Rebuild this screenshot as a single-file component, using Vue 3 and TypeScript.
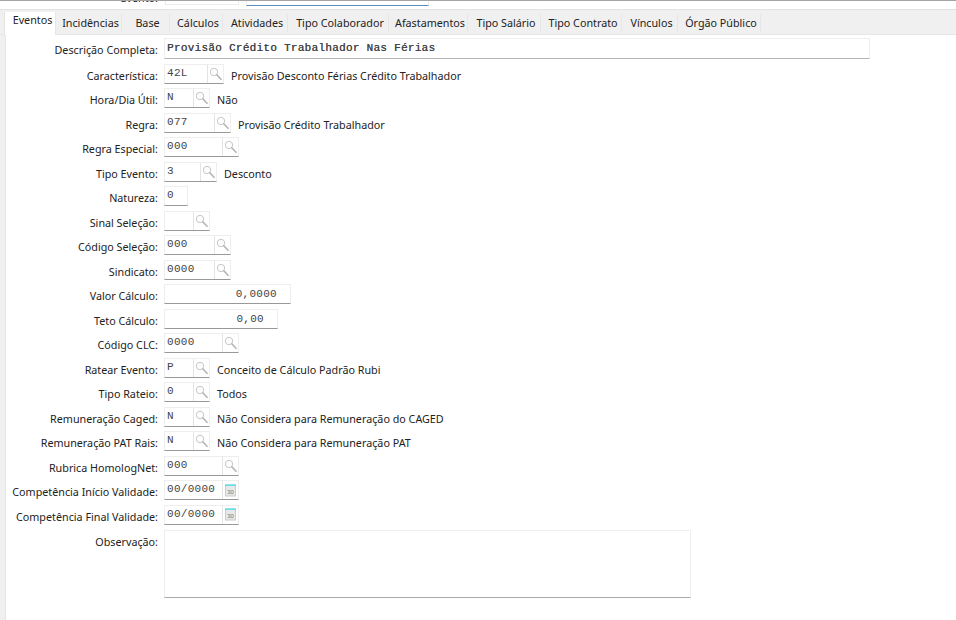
<script setup lang="ts">
interface Row {
  label: string
  value?: string
  width: number
  icon?: 'search' | 'calendar'
  desc?: string
  right?: boolean
}
const tabs = [
  { name: 'Eventos', width: 52 },
  { name: 'Incidências', width: 66 },
  { name: 'Base', width: 48 },
  { name: 'Cálculos', width: 53 },
  { name: 'Atividades', width: 65 },
  { name: 'Tipo Colaborador', width: 101 },
  { name: 'Afastamentos', width: 79 },
  { name: 'Tipo Salário', width: 73 },
  { name: 'Tipo Contrato', width: 81 },
  { name: 'Vínculos', width: 56 },
  { name: 'Órgão Público', width: 83 },
]
const rows: Row[] = [
  { label: 'Característica:', value: '42L', width: 60, icon: 'search', desc: 'Provisão Desconto Férias Crédito Trabalhador' },
  { label: 'Hora/Dia Útil:', value: 'N', width: 46, icon: 'search', desc: 'Não' },
  { label: 'Regra:', value: '077', width: 67, icon: 'search', desc: 'Provisão Crédito Trabalhador' },
  { label: 'Regra Especial:', value: '000', width: 75, icon: 'search' },
  { label: 'Tipo Evento:', value: '3', width: 53, icon: 'search', desc: 'Desconto' },
  { label: 'Natureza:', value: '0', width: 24 },
  { label: 'Sinal Seleção:', value: '', width: 46, icon: 'search' },
  { label: 'Código Seleção:', value: '000', width: 67, icon: 'search' },
  { label: 'Sindicato:', value: '0000', width: 67, icon: 'search' },
  { label: 'Valor Cálculo:', value: '0,0000', width: 127, right: true },
  { label: 'Teto Cálculo:', value: '0,00', width: 114, right: true },
  { label: 'Código CLC:', value: '0000', width: 75, icon: 'search' },
  { label: 'Ratear Evento:', value: 'P', width: 46, icon: 'search', desc: 'Conceito de Cálculo Padrão Rubi' },
  { label: 'Tipo Rateio:', value: '0', width: 46, icon: 'search', desc: 'Todos' },
  { label: 'Remuneração Caged:', value: 'N', width: 46, icon: 'search', desc: 'Não Considera para Remuneração do CAGED' },
  { label: 'Remuneração PAT Rais:', value: 'N', width: 46, icon: 'search', desc: 'Não Considera para Remuneração PAT' },
  { label: 'Rubrica HomologNet:', value: '000', width: 75, icon: 'search' },
  { label: 'Competência Início Validade:', value: '00/0000', width: 75, icon: 'calendar' },
  { label: 'Competência Final Validade:', value: '00/0000', width: 75, icon: 'calendar' },
]
</script>

<template>
  <div class="screen">
    <div class="top">
      <span class="top-label">Evento:</span>
      <div class="top-box"></div>
      <div class="top-box selected"></div>
    </div>
    <div class="tabs">
      <div
        v-for="(tab, i) in tabs"
        :key="tab.name"
        class="tab"
        :class="{ active: i === 0 }"
        :style="{ width: tab.width + 'px' }"
      >{{ tab.name }}</div>
    </div>
    <div class="panel">
      <div class="row first">
        <label class="label">Descrição Completa:</label>
        <div class="field long"><span class="value">Provisão Crédito Trabalhador Nas Férias</span></div>
      </div>
      <div v-for="row in rows" :key="row.label" class="row">
        <label class="label">{{ row.label }}</label>
        <div class="field" :class="{ right: row.right }" :style="{ width: row.width + 'px' }">
          <span class="value">{{ row.value }}</span>
          <span v-if="row.icon" class="icon-cell">
            <svg v-if="row.icon === 'search'" width="13" height="14" viewBox="0 0 13 14" fill="none">
              <circle cx="5" cy="5" r="3.7" stroke="#c4c8cc" stroke-width="1" fill="#fdfdfd" />
              <path d="M7.8 7.8 L12 12.3" stroke="#b4b4b4" stroke-width="1.6" stroke-linecap="round" />
            </svg>
            <svg v-else width="11" height="13" viewBox="0 0 11 13">
              <rect x="0.5" y="1" width="10" height="11" fill="#e8e8e8" stroke="#cccccc" stroke-width="1" />
              <rect x="0" y="0.5" width="11" height="1.4" fill="#4fe0e8" />
              <text x="5.5" y="10" text-anchor="middle" class="cal-num">30</text>
            </svg>
          </span>
        </div>
        <span v-if="row.desc" class="desc">{{ row.desc }}</span>
      </div>
      <div class="row notes-row">
        <label class="label">Observação:</label>
        <div class="field notes"></div>
      </div>
    </div>
  </div>
</template>

<style scoped>
.screen {
  width: 956px;
  height: 620px;
  overflow: hidden;
  background: #fff;
  box-sizing: border-box;
  border-top: 1px solid #a4a4a4;
  font-family: "Noto Sans", "Liberation Sans", sans-serif;
  font-size: 10.75px;
  color: #222;
}
.top {
  height: 8px;
  display: flex;
  align-items: flex-start;
  border-bottom: 1px solid #e2e2e2;
  box-sizing: content-box;
}
.top-label {
  width: 158px;
  flex: none;
  text-align: right;
  line-height: 14px;
  height: 4px;
  overflow: hidden;
  display: flex;
  justify-content: flex-end;
  align-items: flex-end;
}
.top-box {
  width: 74px;
  height: 4px;
  margin-left: 7px;
  border-right: 1px solid #ececec;
  border-left: 1px solid #ececec;
  border-bottom: 1px solid #ececec;
  box-sizing: border-box;
  flex: none;
}
.top-box.selected {
  width: 183px;
  height: 5px;
  border-bottom: 1px solid #5b8fbd;
}
.tabs {
  height: 25px;
  box-sizing: border-box;
  padding: 4px 0 0 4px;
  background: #f0f0f0;
  border-bottom: 1px solid #e6e6e6;
  display: flex;
}
.tab {
  height: 18px;
  box-sizing: border-box;
  text-align: center;
  line-height: 18px;
  padding-left: 4px;
  border-right: 1px solid #e6e6e6;
  white-space: nowrap;
}
.tab.active {
  height: 23px;
  margin-top: -2px;
  background: #fff;
  border-left: 1px solid #e4e4e4;
  line-height: 17px;
  padding-left: 5px;
}
.panel {
  height: 585px;
  border-left: 5px solid #f0f0f0;
  box-shadow: inset 1px 0 #e6e6e6;
  box-sizing: border-box;
  padding-top: 3px;
  position: relative;
}
.row {
  height: 24.5px;
  display: flex;
  align-items: flex-start;
}
.row.first {
  height: 25.5px;
}
.label {
  width: 153px;
  flex: none;
  text-align: right;
  margin-top: 4px;
  line-height: 16px;
  white-space: nowrap;
}
.field {
  margin-left: 6px;
  height: 20px;
  box-sizing: border-box;
  display: flex;
  background: #fff;
  border: 1px solid #eeeeee;
  border-bottom: 1px solid #999;
  flex: none;
}
.field.long {
  width: 706px;
  height: 21px;
  border-bottom-color: #b4b4b4;
}
.field.notes {
  width: 527px;
  height: 68px;
  border-bottom-color: #aaa;
}
.value {
  flex: 1;
  padding: 0 0 0 2px;
  font-family: "Liberation Mono", monospace;
  font-size: 11px;
  letter-spacing: 0.28px;
  line-height: 17px;
  color: #444;
  white-space: pre;
}
.long .value {
  color: #444;
  line-height: 19px;
  text-shadow: 0.2px 0 0 #555;
}
.right .value {
  text-align: right;
  padding-right: 13px;
  line-height: 19px;
}
.icon-cell {
  width: 15px;
  flex: none;
  border-left: 1px solid #e4e4e4;
  display: flex;
  align-items: center;
  justify-content: center;
}
.cal-num {
  font-family: "Liberation Sans", sans-serif;
  font-size: 6px;
  fill: #777;
}
.desc {
  margin-left: 7px;
  margin-top: 4px;
  line-height: 16px;
  white-space: nowrap;
}
.notes-row {
  height: 68px;
  margin-top: 1px;
}
</style>
